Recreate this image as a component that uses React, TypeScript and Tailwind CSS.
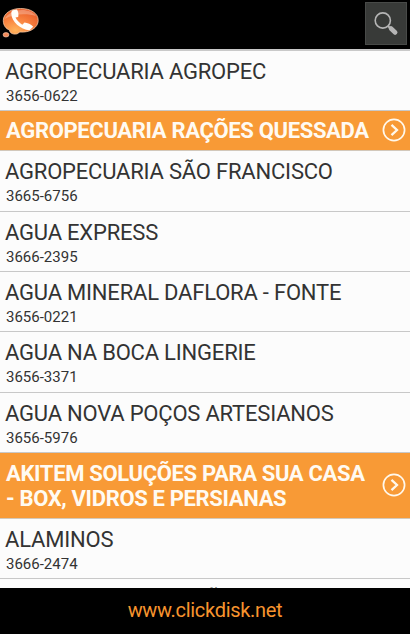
type Row = { name: string; phone?: string; size: string; featured?: boolean };

const rows: Row[] = [
  { name: 'AGROPECUARIA AGROPEC', phone: '3656-0622', size: 'h-[60px]' },
  { name: 'AGROPECUARIA RAÇÕES QUESSADA', size: 'h-[40px]', featured: true },
  { name: 'AGROPECUARIA SÃO FRANCISCO', phone: '3665-6756', size: 'h-[61px]' },
  { name: 'AGUA EXPRESS', phone: '3666-2395', size: 'h-[60px]' },
  { name: 'AGUA MINERAL DAFLORA - FONTE', phone: '3656-0221', size: 'h-[60px]' },
  { name: 'AGUA NA BOCA LINGERIE', phone: '3656-3371', size: 'h-[61px]' },
  { name: 'AGUA NOVA POÇOS ARTESIANOS', phone: '3656-5976', size: 'h-[60px]' },
  { name: 'AKITEM SOLUÇÕES PARA SUA CASA - BOX, VIDROS E PERSIANAS', size: 'h-[66px]', featured: true },
  { name: 'ALAMINOS', phone: '3666-2474', size: 'h-[60px]' },
  { name: 'ALBERTO L. GUIMARÃES', size: 'h-[60px]' },
];

function Logo() {
  return (
    <svg width="40" height="40" viewBox="0 0 40 40" className="shrink-0">
      <defs>
        <radialGradient id="bubble" cx="0.35" cy="0.85" r="0.85">
          <stop offset="0" stopColor="#ffb45c" />
          <stop offset="0.5" stopColor="#f98440" />
          <stop offset="1" stopColor="#ea5f2c" />
        </radialGradient>
      </defs>
      <ellipse cx="6" cy="38.500" rx="2.900" ry="2.200" transform="translate(0 -3.700)" fill="#f58a58" stroke="#f3c3a7" strokeWidth="0.700" />
      <path
        d="M20.500 8.500C11 8.500 3.300 13.500 3.300 20.500C3.300 25.500 6 28.800 9.500 30C9.500 34.500 17.500 35.500 19.500 32C30 33 38.200 27.500 38.200 20.500C38.200 13 30.500 8.500 20.500 8.500Z"
        fill="url(#bubble)" stroke="#f6c6a2" strokeWidth="0.800"
      />
      <path d="M4.500 19C8 13 15 10 22 10C28 10 33 12 36 16C26 13 13 14 4.500 19Z" fill="#fff" opacity="0.280" />
      <path
        d="M12.700 10.200L17 9.500C18.300 11.500 18.800 14.500 18.200 17L15.500 17.500C17 20.500 19.500 23 22.300 24.800L24.500 22.600C27.500 22.900 31 24.400 33.200 26.800L29.500 30.300C20.500 29.500 11.500 22 11.300 13.500C11.300 12 11.800 10.800 12.700 10.200Z"
        fill="#fffdf9"
      />
    </svg>
  );
}

function Chevron() {
  return (
    <svg width="24" height="24" viewBox="0 0 24 24" fill="none" stroke="#fff8ec" className="mb-px shrink-0">
      <circle cx="12" cy="12" r="10.600" strokeWidth="1.700" />
      <path d="M9.500 6.800L15 12L9.500 17.200" strokeWidth="2.300" />
    </svg>
  );
}

export default function App() {
  return (
    <div className="flex h-[634px] w-[410px] flex-col overflow-hidden bg-black font-['Roboto',sans-serif]">
      <header className="flex h-[49px] shrink-0 items-start justify-between bg-black pr-[3px]">
        <Logo />
        <button aria-label="Buscar" className="mt-[2px] flex h-[43px] w-[42px] items-center justify-center border border-[#484a48] bg-[#383a38]">
          <svg width="26" height="26" viewBox="0 0 26 26" fill="none" stroke="#b5b5b5">
            <circle cx="9.800" cy="9.500" r="7.600" strokeWidth="1.600" />
            <path d="M15 15L18 18" strokeWidth="2" />
            <path d="M18 17.500L22.200 21.500" strokeWidth="4.500" strokeLinecap="round" />
          </svg>
        </button>
      </header>
      <main className="min-h-0 flex-1 overflow-hidden border-t-2 border-[#c9c9c9] bg-[#fcfcfc]">
        {rows.map((row) =>
          row.featured ? (
            <div key={row.name} className={`${row.size} flex items-center justify-between border-b border-[#d2c8bb] bg-[#f89a36] pl-[5px] pr-[4px] text-[#fffaf2]`}>
              <div className="w-[371px] pl-px text-[22px] font-bold leading-[25px] tracking-[-0.34px]">{row.name}</div>
              <Chevron />
            </div>
          ) : (
            <div key={row.name} className={`${row.size} border-b border-[#c8c8c8] pl-[5px] pt-[7px] text-[#333]`}>
              <div className="h-[28px] whitespace-nowrap text-[22px] leading-[27px] tracking-[-0.2px]">{row.name}</div>
              {row.phone && <div className="pl-px text-[15px] leading-[20px]">{row.phone}</div>}
            </div>
          ),
        )}
      </main>
      <footer className="flex h-[46px] shrink-0 items-center justify-center bg-black pb-[2px] text-[20px] tracking-[-0.3px] text-[#f7942e]">
        www.clickdisk.net
      </footer>
    </div>
  );
}
